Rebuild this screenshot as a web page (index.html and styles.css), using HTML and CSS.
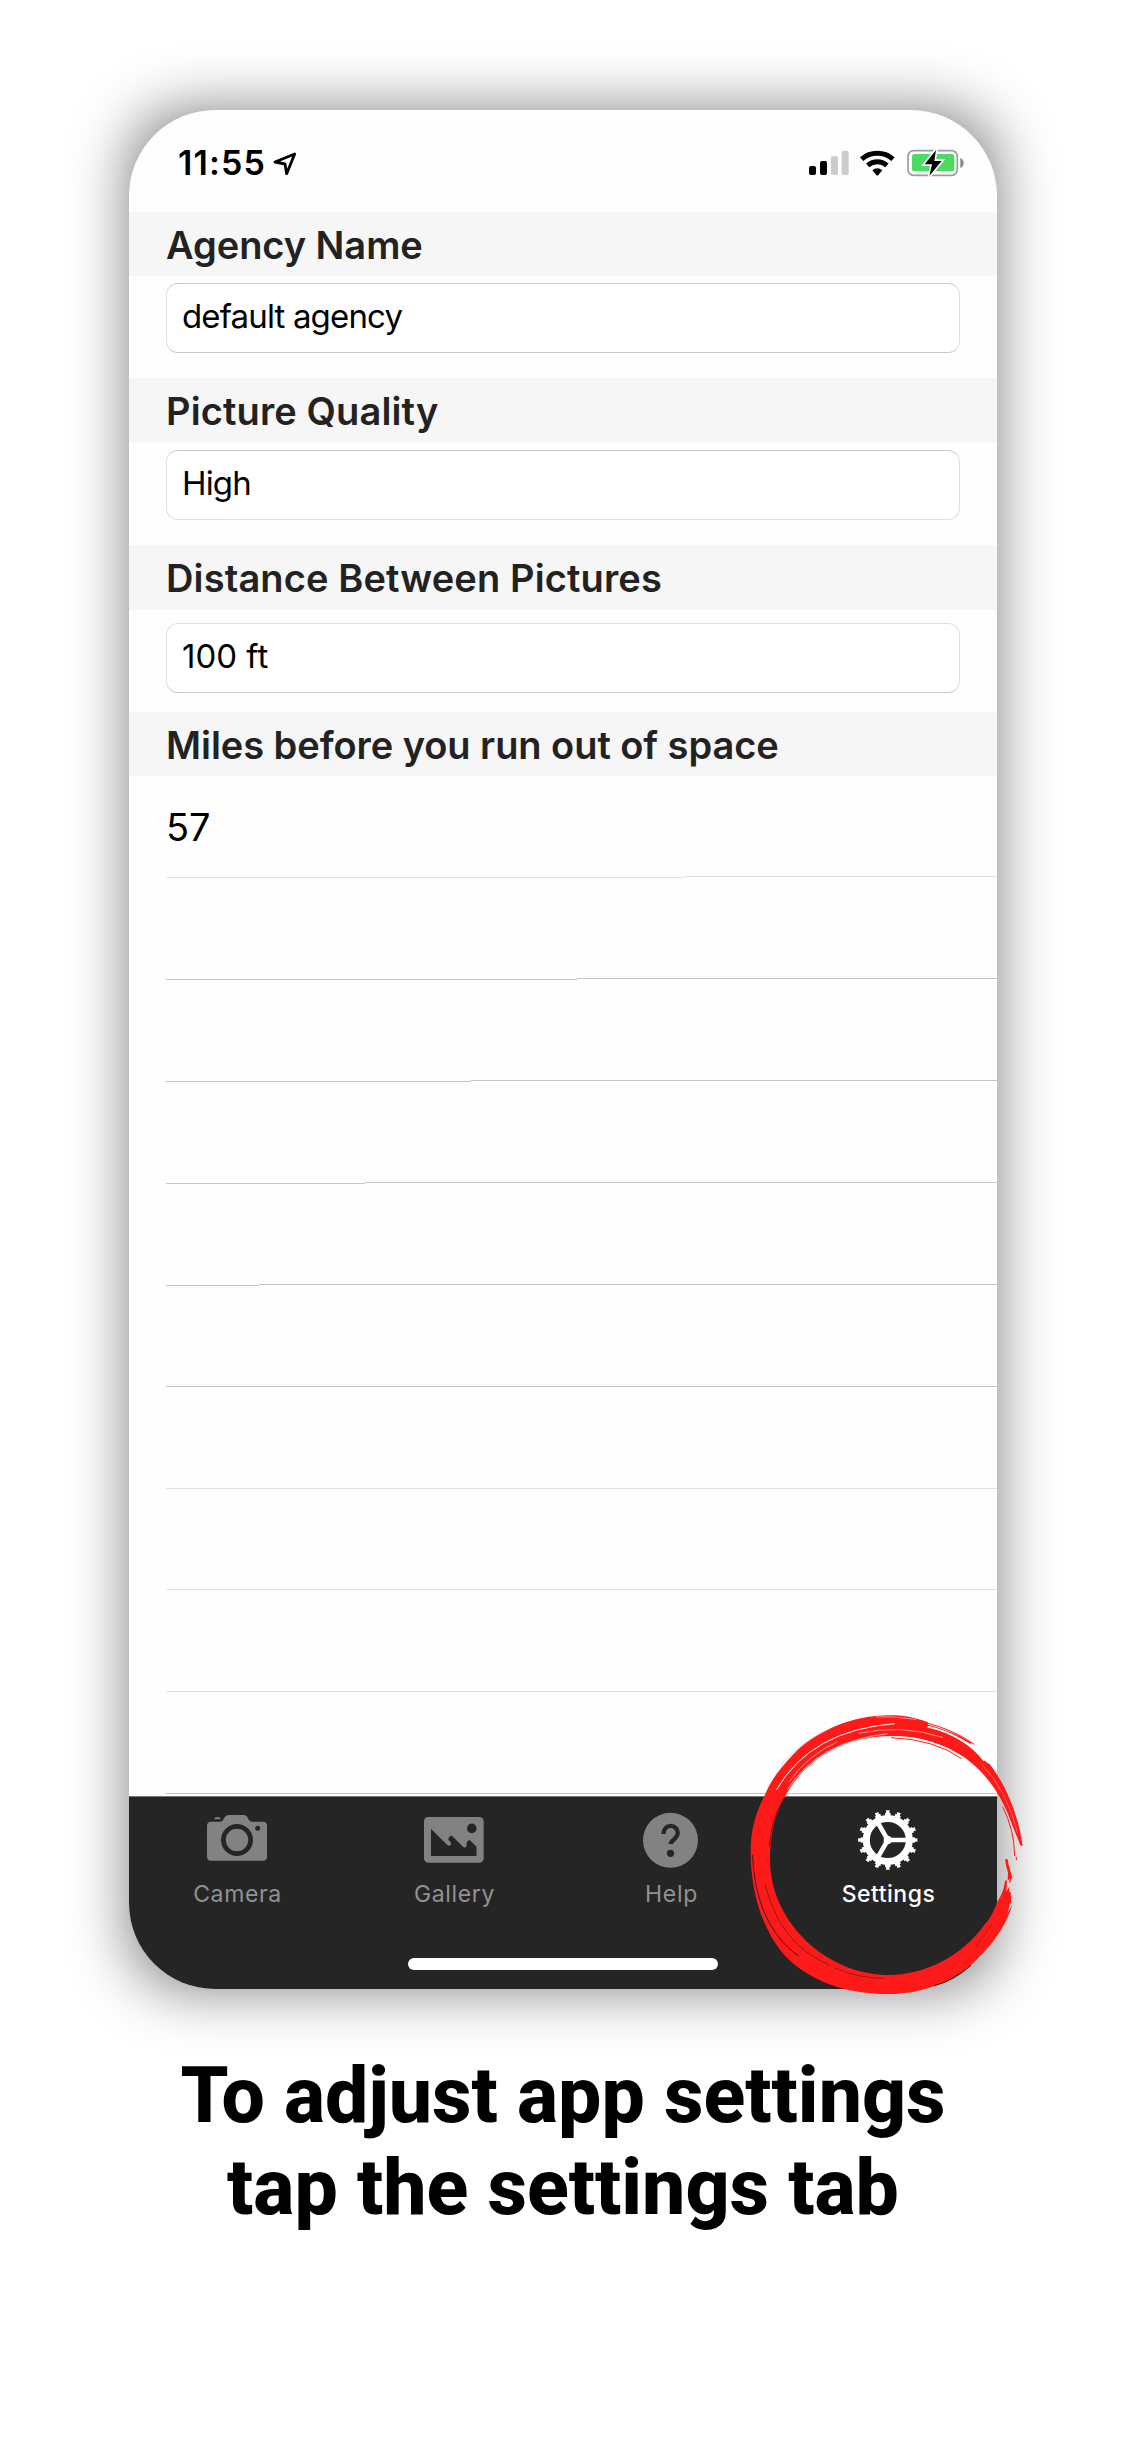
FILE: index.html
```html
<!DOCTYPE html>
<html lang="en">
<head>
<meta charset="utf-8">
<title>App settings</title>
<link rel="stylesheet" href="styles.css">
</head>
<body>
<main class="page">
  <div class="phone">
    <div class="screen">
      <header class="status">
        <span class="time">11:55</span>
        <svg class="location" viewBox="636 270 75 75"><path d="M704 279 L645 303 L675 309 L680 338 Z" fill="none" stroke="#000" stroke-width="8.500" stroke-linejoin="round"/></svg>
        <div class="indicators">
          <svg class="signal" viewBox="87 60 120 78">
            <rect x="87" y="108" width="21" height="27" rx="6"/><rect x="120" y="93" width="21" height="42" rx="6"/>
            <rect x="153" y="78" width="21" height="57" rx="5" fill="#ccc"/><rect x="185" y="62" width="21" height="73" rx="5" fill="#ccc"/>
          </svg>
          <svg class="wifi" viewBox="241 58 105 80">
            <g fill="none" stroke="#000" stroke-width="15"><path d="M246 85 Q266 67.500 293 67.500 T340 85"/><path d="M264 104 Q277 93 293 93 T322 104"/></g>
            <path d="M278 119 Q293 106 308 119 L296 133 Q293 137 290 133 Z"/>
          </svg>
          <svg class="battery" viewBox="381 57 171 84">
            <rect x="384" y="62" width="148" height="74" rx="17" fill="#fff" stroke="#999b9d" stroke-width="5"/>
            <rect x="396" y="72" width="127" height="52" rx="8" fill="#4cd964"/>
            <path d="M541 84 Q551 88 551 99 T541 114 Z" fill="#88898c"/>
            <path d="M468 60 L434 103 H456 L448 138 L485 93 H463 Z" fill="#000" stroke="#fff" stroke-width="10" paint-order="stroke"/>
          </svg>
        </div>
      </header>

      <section class="group">
        <h2 class="heading">Agency Name</h2>
        <div class="field tight">default agency</div>
      </section>
      <section class="group">
        <h2 class="heading wide">Picture Quality</h2>
        <div class="field tight soft-bottom">High</div>
      </section>
      <section class="group low">
        <h2 class="heading wide">Distance Between Pictures</h2>
        <div class="field soft-top">100 ft</div>
      </section>
      <section class="list">
        <h2 class="heading">Miles before you run out of space</h2>
        <div class="row light" style="--step: 517px">57</div>
        <div class="row" style="--step: 411px"></div>
        <div class="row" style="--step: 305px"></div>
        <div class="row" style="--step: 199px"></div>
        <div class="row" style="--step: 93px"></div>
        <div class="row short"></div>
        <div class="row light"></div>
        <div class="row light short"></div>
        <div class="row light"></div>
        <div class="row"></div>
      </section>

      <footer class="dock">
        <nav class="tabs">
          <div class="tab">
            <svg class="icon" viewBox="0 0 64 64">
              <path fill="#828282" d="M6 13.700 H15 Q17.500 13.700 19 10.500 Q20.300 7 24 7 H38.500 Q42 7 43 10.500 Q44.500 13.700 47 13.700 H58 Q62 13.700 62 18 V48.500 Q62 52.700 58 52.700 H6 Q2 52.700 2 48.500 V18 Q2 13.700 6 13.700 Z M9 11.300 Q10 9 12.500 9 T16 11.300 Z"/>
              <circle cx="32" cy="32" r="13.600" fill="none" stroke="#252525" stroke-width="4.800"/><circle cx="52.700" cy="20.200" r="2.500" fill="#252525"/>
            </svg>
            <span>Camera</span>
          </div>
          <div class="tab">
            <svg class="icon" viewBox="0 0 64 64">
              <rect x="2" y="9" width="59.700" height="45.700" rx="4.500" fill="#828282"/>
              <circle cx="49.800" cy="20.400" r="4.800" fill="#252525"/>
              <path fill="#252525" d="M9 20.800 L25 36.800 Q27 38.500 28.700 37 Q30 35.500 28 33.500 L26.300 31.800 Q26.500 28.500 29.700 27.500 L41 38.800 Q43 40.500 44.300 38.500 Q45 36.500 44.500 34.700 Q45.500 32.500 47.700 32 L54.500 38.700 V48 H9 Z"/>
            </svg>
            <span>Gallery</span>
          </div>
          <div class="tab">
            <svg class="icon" viewBox="0 0 64 64">
              <circle cx="31.500" cy="32.300" r="27.500" fill="#828282"/>
              <path d="M24.600 26 V25 A7.100 7.100 0 0 1 38.800 25 Q38.800 27.500 36 30.500 Q31.800 34 31.600 36" fill="none" stroke="#252525" stroke-width="4.300"/>
              <circle cx="31.500" cy="45.300" r="3.600" fill="#252525"/>
            </svg>
            <span>Help</span>
          </div>
          <div class="tab active">
            <svg class="icon" viewBox="0 0 64 64" fill="none" stroke="#fff">
              <g transform="translate(31.800 32)">
                <circle r="21.500" stroke-width="7"/>
                <circle r="25.700" stroke-width="3" pathLength="160" stroke-dasharray="5.600 4.400" stroke-dashoffset="2.800"/>
                <circle r="28" stroke-width="3.400" pathLength="160" stroke-dasharray="3.200 6.800" stroke-dashoffset="1.600"/>
                <path d="M0 0 H20 M0 0 L-10 -17.300 M0 0 L-10 17.300" stroke-width="4.600"/>
                <circle r="3.300" fill="#fff" stroke-width="2"/>
              </g>
            </svg>
            <span>Settings</span>
          </div>
        </nav>
        <div class="home"></div>
      </footer>
    </div>

    <svg class="marker" viewBox="84 36 840 858">
      <path fill="#ff1a1a" d="M905 438 C892 345 855 255 806 192 L798 188 C745 130 680 92 622 77 L620 66 C570 50 545 46 510 46 C395 45 285 92 215 165 C175 207 150 240 130 288 C100 345 88 400 89 460 C90 580 125 690 190 765 C270 850 390 885 515 882 C610 878 680 850 750 795 C800 750 852 690 875 613 L860 640 L873 585 L864 598 L865 560 L853 578 L853 540 C848 570 840 590 830 602 C820 630 808 656 790 675 C720 770 610 828 490 825 C300 815 147 655 147 480 C148 390 165 335 195 285 C260 165 385 108 510 108 C600 108 665 130 730 172 C800 222 845 295 868 360 L898 436 Z"/>
      <g fill="none" stroke="#ff1a1a" stroke-width="3">
        <path d="M615 68 Q700 90 760 133"/><path d="M620 76 Q700 98 750 130" stroke-width="5"/>
        <path d="M845 320 Q880 390 881 468"/><path d="M885 470 L887 480"/>
        <path d="M856 478 L860 500 L870 535" stroke-width="8"/><path d="M864 500 L862 538 L872 528 L866 548" stroke-width="4"/>
        <path d="M855 542 L853 580 M866 575 L867 610" stroke-width="6"/>
        <path d="M722 176 Q640 118 510 113"/>
      </g>
      <g fill="none" stroke="#fff" stroke-width="3">
        <path d="M166 270 Q270 90 522 71"/><path d="M620 80 Q730 105 790 182" stroke-width="5"/>
        <path d="M200 268 Q290 125 500 101" stroke-width="2"/><path d="M412 100 Q540 72 665 112" stroke-width="1.500"/>
        <path d="M465 51 Q520 48 585 59" stroke-width="1.500"/><path d="M205 245 Q260 165 350 125" stroke-width="1.500"/>
        <path d="M780 190 Q860 275 890 400" stroke="#ff8080" stroke-width="2"/>
        <path d="M180 195 Q240 125 330 85" stroke="#ff9090" stroke-width="1.500"/>
      </g>
      <g fill="none" stroke="#3a1c1c" stroke-width="1.800">
        <path d="M95 465 C100 600 145 705 232 768" stroke-width="3"/><path d="M133 555 C165 680 230 755 330 797"/>
        <path d="M340 803 Q410 835 490 835"/><path d="M815 670 L764 740" stroke-width="1.200"/>
        <path d="M188 295 Q148 365 145 440" stroke-width="2"/><path d="M640 857 Q700 842 750 796" stroke-width="3"/>
      </g>
    </svg>
  </div>
  <h1 class="caption">To adjust app settings<br>tap the settings tab</h1>
</main>
</body>
</html>
```
FILE: styles.css
```css
* { box-sizing: border-box; }

body {
  margin: 0;
  background: #fff;
  font-family: Inter, "Liberation Sans", sans-serif;
  color: #000;
}

.page {
  height: 2437px;
  padding-top: 110px;
  overflow: hidden;
  display: flex;
  flex-direction: column;
  align-items: center;
}

.phone {
  position: relative;
  isolation: isolate;
  width: 868px;
  height: 1879px;
  flex: none;
}

.phone::before {
  content: "";
  position: absolute;
  inset: 0;
  z-index: -1;
  border-radius: 60px;
  background: rgba(0, 0, 0, .5);
  filter: blur(30px);
}

.screen {
  height: 100%;
  display: flex;
  flex-direction: column;
  border-radius: 86px;
  overflow: hidden;
  background: #fefefe;
}

.status {
  height: 102px;
  padding: 4px 33px 0 49px;
  display: flex;
  align-items: center;
}

.time { font-size: 34px; font-weight: 600; line-height: 40px; width: 94px; letter-spacing: 1.1px; }
.location { width: 25px; height: 25px; }
.indicators { margin-left: auto; display: flex; align-items: center; }
.signal { width: 40px; height: 26px; margin-right: 11px; }
.wifi { width: 35px; height: 26.700px; margin-right: 12px; }
.battery { width: 57px; height: 28px; }
.status svg { display: block; }

.group { height: 167px; }
.group:nth-of-type(1) { height: 166px; }

.heading {
  margin: 0;
  height: 64px;
  padding: 2px 37px 0;
  background: #f6f6f6;
  color: #222;
  font-size: 38px;
  font-weight: 600;
  line-height: 63px;
  letter-spacing: -.05px;
  white-space: nowrap;
}

.heading.wide { height: 65px; letter-spacing: .13px; }

.field {
  width: 794px;
  height: 70px;
  margin: 7px 0 0 37px;
  padding: 0 15px 3px;
  border: 1px solid #c8c8c8;
  border-left-color: #dedede;
  border-right-color: #dedede;
  border-radius: 12px;
  background: #fff;
  font-size: 33px;
  line-height: 65px;
}

.field.tight { letter-spacing: -.85px; }
.low .field { margin-top: 13px; }
.soft-bottom { border-bottom-color: #e0e0e0; }
.soft-top { border-top-color: #e0e0e0; }

.row {
  --line: #c6c6c6;
  --step: 0px;
  height: 102px;
  margin-left: 37px;
  font-size: 38px;
  line-height: 103px;
  background:
    linear-gradient(var(--line), var(--line)) left bottom / var(--step) 1px no-repeat,
    linear-gradient(90deg, transparent var(--step), var(--line) var(--step)) left bottom 1px / 100% 1px no-repeat;
}

.row.light { --line: #e0e0e0; }
.row.short { height: 101px; }
.row:nth-of-type(n + 6) { background-position: left bottom, left bottom; }

.dock {
  margin-top: auto;
  height: 193px;
  border-top: 1px solid #777;
  background: #252525;
  display: flex;
  flex-direction: column;
  align-items: center;
}

.tabs {
  width: 100%;
  padding-top: 11px;
  display: grid;
  grid-template-columns: repeat(4, 217px);
}

.tab {
  display: flex;
  flex-direction: column;
  align-items: center;
  color: #929292;
  font-size: 23px;
  line-height: 30px;
  letter-spacing: .65px;
}

.icon { display: block; width: 64px; height: 64px; margin: 0 2px 7px 0; }
.active { color: #fff; font-weight: 500; letter-spacing: .5px; }

.home {
  width: 310px;
  height: 12px;
  margin-top: 49px;
  border-radius: 6px;
  background: #fff;
}

.marker {
  position: absolute;
  left: 620px;
  top: 1602px;
  width: 280px;
  height: 286px;
}

.caption {
  margin: 61px 0 0;
  font-family: Roboto, "Liberation Sans", sans-serif;
  font-size: 77px;
  font-weight: 800;
  line-height: 92px;
  text-align: center;
}
```
